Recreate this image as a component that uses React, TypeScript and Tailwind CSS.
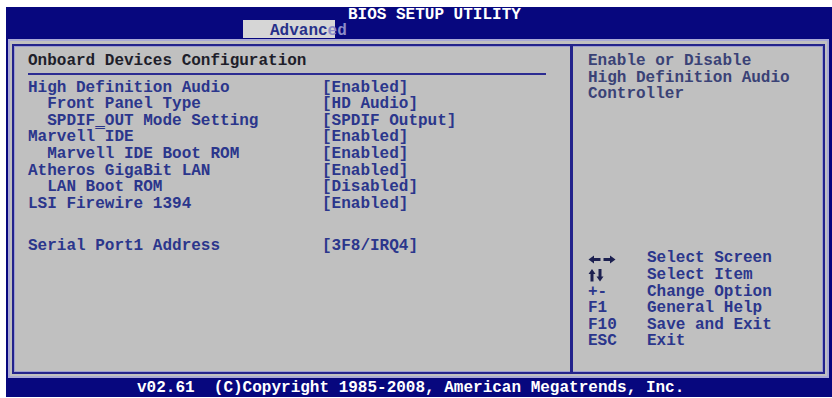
import React from 'react'

const items: Array<{ label: string; value: string; sub?: boolean }> = [
  { label: 'High Definition Audio', value: '[Enabled]' },
  { label: 'Front Panel Type', value: '[HD Audio]', sub: true },
  { label: 'SPDIF_OUT Mode Setting', value: '[SPDIF Output]', sub: true },
  { label: 'Marvell\u203EIDE', value: '[Enabled]' },
  { label: 'Marvell IDE Boot ROM', value: '[Enabled]', sub: true },
  { label: 'Atheros GigaBit LAN', value: '[Enabled]' },
  { label: 'LAN Boot ROM', value: '[Disabled]', sub: true },
  { label: 'LSI Firewire 1394', value: '[Enabled]' },
]

const legend: Array<{ key: React.ReactNode; text: string }> = [
  { key: <LeftRight />, text: 'Select Screen' },
  { key: <UpDown />, text: 'Select Item' },
  { key: '+-', text: 'Change Option' },
  { key: 'F1', text: 'General Help' },
  { key: 'F10', text: 'Save and Exit' },
  { key: 'ESC', text: 'Exit' },
]

function LeftRight() {
  return (
    <svg width="28" height="16" viewBox="0 0 28 16" className="block">
      <path d="M0.5 8.5 L6 4.5 L6 7 L12.5 7 L12.5 10 L6 10 L6 12.5 Z" fill="#1c2050" />
      <path d="M27.5 8.5 L22 4.5 L22 7 L15.5 7 L15.5 10 L22 10 L22 12.5 Z" fill="#1c2050" />
    </svg>
  )
}

function UpDown() {
  return (
    <svg width="18" height="16" viewBox="0 0 18 16" className="block">
      <path d="M4 2 L0.5 7 L2.5 7 L2.5 14.5 L5.5 14.5 L5.5 7 L7.5 7 Z" fill="#1c2050" />
      <path d="M12 14.5 L8.5 9.5 L10.5 9.5 L10.5 2 L13.5 2 L13.5 9.5 L15.5 9.5 Z" fill="#1c2050" />
    </svg>
  )
}

export default function App() {
  return (
    <div className="h-[398px] w-[832px] overflow-hidden bg-white pl-[6px] pt-[7px] font-['Liberation_Mono',monospace] text-[16px] font-bold">
      <div className="flex h-[390px] w-[826px] flex-col bg-[#07077e]">
        {/* Header */}
        <div className="flex h-[32px] flex-col">
          <div className="h-[13px] whitespace-pre pl-[342px] leading-[16px] text-white">
            BIOS SETUP UTILITY
          </div>
          <div className="ml-[237px] h-[18px] w-[92px] whitespace-pre bg-[#d6d6d6] pl-[27px] pt-[3px] leading-[16px]">
            <span className="text-[#26308a]">Advanc</span>
            <span className="text-[#8c8cc8]">ed</span>
          </div>
        </div>

        {/* Body */}
        <div className="ml-[2px] mr-[3px] flex h-[339px] border-x-2 border-y-2 border-[#a9a9d6] bg-[#c0c0c0] pb-[2px] pl-[2px] pr-[2px] pt-[3px]">
          <div className="flex h-full w-full border-2 border-[#23238c] shadow-[inset_0_0_0_1px_#9c9cd0]">
            {/* Left panel */}
            <div className="w-[559px] border-r-[3px] border-[#23238c] pl-[14px] pt-[7px] leading-[16.6px]">
              <div className="whitespace-pre text-[#1e1e2a]">Onboard Devices Configuration</div>
              <div className="mb-[5px] mt-[3px] h-[2px] w-[518px] bg-[#2c2c92]" />
              {items.map((it) => (
                <div key={it.label} className="flex whitespace-pre text-[#2b368c]">
                  <span className="w-[294px]">{(it.sub ? '  ' : '') + it.label}</span>
                  <span>{it.value}</span>
                </div>
              ))}
              <div className="h-[26px]" />
              <div className="flex whitespace-pre text-[#2b368c]">
                <span className="w-[294px]">Serial Port1 Address</span>
                <span>[3F8/IRQ4]</span>
              </div>
            </div>

            {/* Right panel */}
            <div className="flex flex-1 flex-col pb-[22px] pl-[15px] pt-[7px] leading-[16.6px]">
              <div className="whitespace-pre text-[#3a4276]">
                <div>Enable or Disable</div>
                <div>High Definition Audio</div>
                <div>Controller</div>
              </div>
              <div className="mt-auto text-[#2b368c]">
                {legend.map((l) => (
                  <div key={l.text} className="flex h-[16.6px] items-center whitespace-pre">
                    <span className="w-[59px]">{l.key}</span>
                    <span>{l.text}</span>
                  </div>
                ))}
              </div>
            </div>
          </div>
        </div>

        {/* Footer */}
        <div className="h-[19px] whitespace-pre pl-[131px] leading-[12px] text-white">
          <div className="pt-[4px]">v02.61  (C)Copyright 1985-2008, American Megatrends, Inc.</div>
        </div>
      </div>
    </div>
  )
}
